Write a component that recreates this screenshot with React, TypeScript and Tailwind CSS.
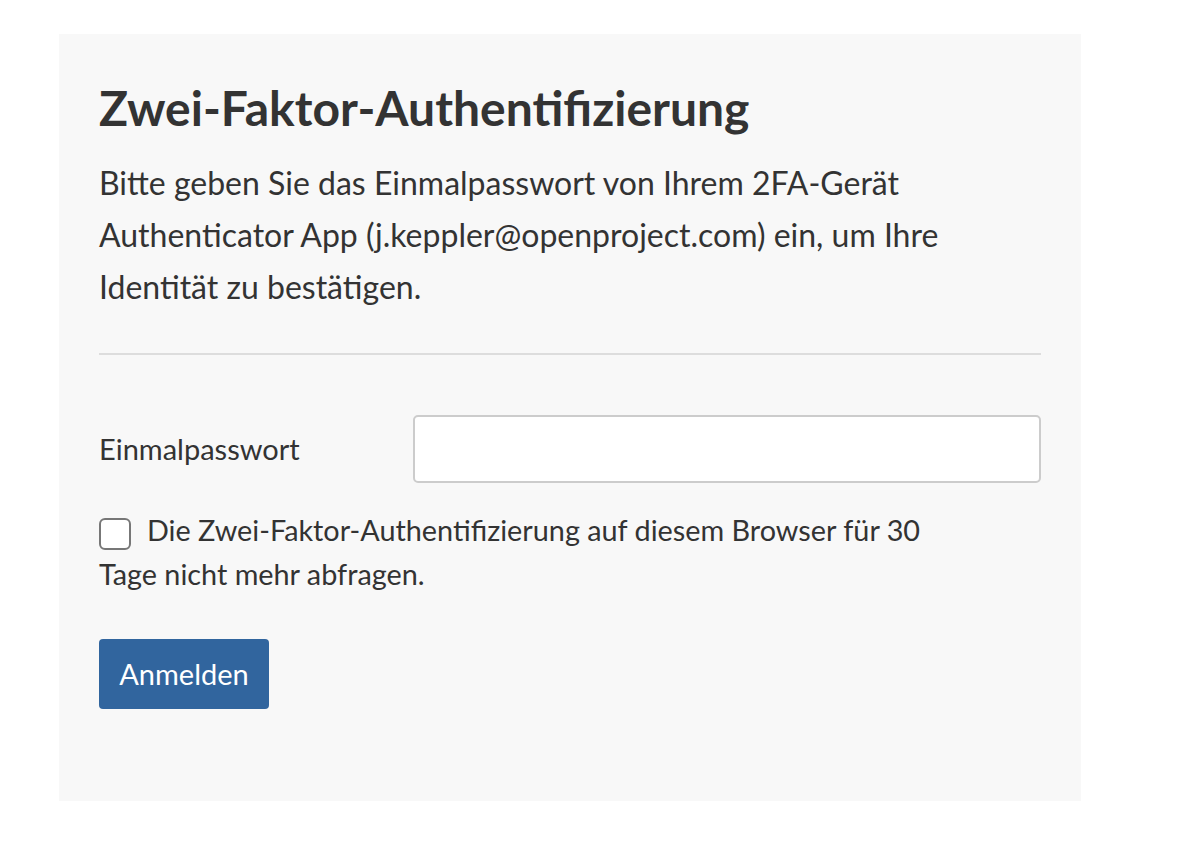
import { useState } from "react";

export default function App() {
  const [code, setCode] = useState("");
  const [remember, setRemember] = useState(false);

  return (
    <div className="min-h-screen bg-white pt-[34px] pl-[59px] font-['Lato','Noto_Sans',sans-serif] text-[#333333]">
      <div className="w-[1022px] h-[767px] bg-[#f8f8f8] px-10 pt-[44px]">
        <h1 className="text-[48px] font-bold leading-[60px]">Zwei-Faktor-Authentifizierung</h1>
        <p className="mt-[19px] text-[32px] leading-[52px]">
          Bitte geben Sie das Einmalpasswort von Ihrem 2FA-Gerät Authenticator App
          (j.keppler@openproject.com) ein, um Ihre Identität zu bestätigen.
        </p>
        <hr className="mt-[40px] border-t-2 border-[#dddddd]" />
        <form className="mt-[60px]" onSubmit={(e) => e.preventDefault()}>
          <div className="flex items-center">
            <label htmlFor="otp" className="w-[314px] text-[29px]">
              Einmalpasswort
            </label>
            <input
              id="otp"
              value={code}
              onChange={(e) => setCode(e.target.value)}
              className="h-[68px] flex-1 rounded-[5px] border-2 border-[#cccccc] bg-white px-4 text-[29px] outline-none"
            />
          </div>
          <label className="mt-[25px] block w-[860px] text-[28.8px] leading-[44px]">
            <input
              type="checkbox"
              checked={remember}
              onChange={(e) => setRemember(e.target.checked)}
              className="mr-4 inline-block h-[32px] w-[32px] appearance-none rounded-[6px] border-2 border-[#777777] bg-white align-middle"
            />
            Die Zwei-Faktor-Authentifizierung auf diesem Browser für 30 Tage nicht mehr abfragen.
          </label>
          <button
            type="submit"
            className="mt-[43px] h-[70px] w-[170px] rounded-[4px] bg-[#31659e] text-[29px] text-white"
          >
            Anmelden
          </button>
        </form>
      </div>
    </div>
  );
}
